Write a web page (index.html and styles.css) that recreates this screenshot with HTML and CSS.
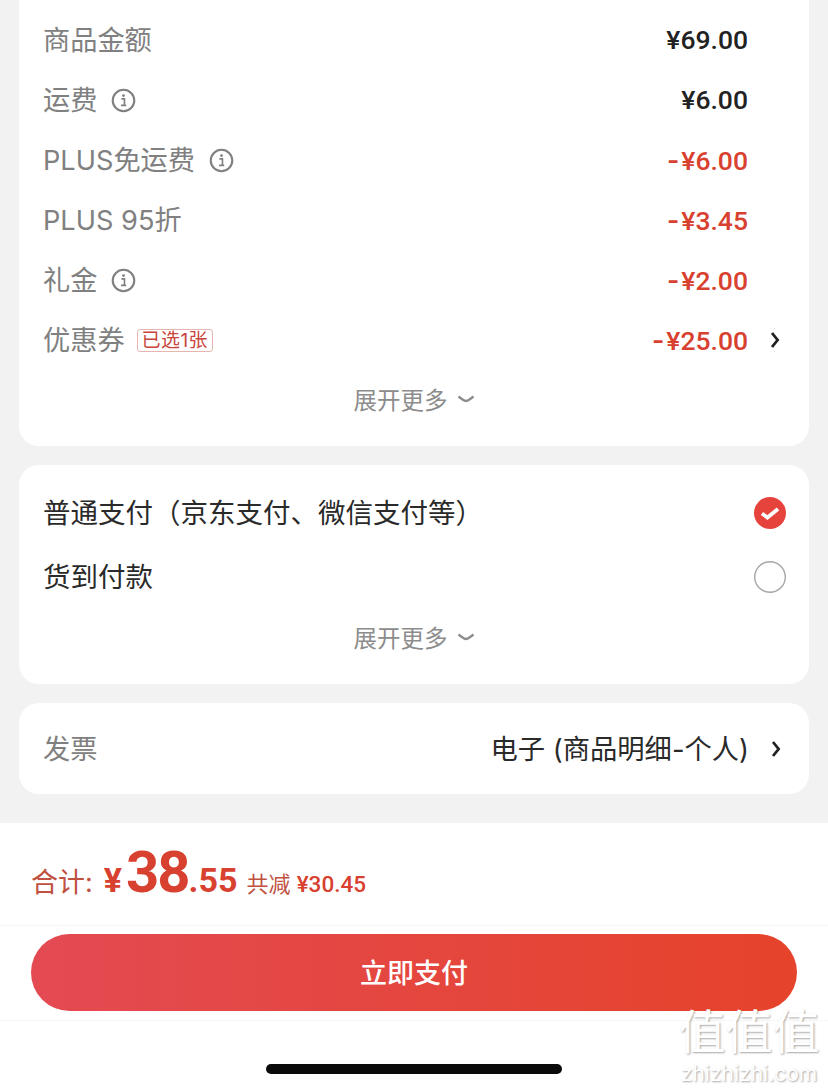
FILE: index.html
```html
<!DOCTYPE html>
<html lang="zh-CN">
  <head>
    <meta charset="UTF-8" />
    <meta name="viewport" content="width=device-width, initial-scale=1.0" />
    <title>订单结算</title>
    <link rel="stylesheet" href="styles.css">
  </head>
  <body>
    <svg class="defs" width="0" height="0">
      <symbol id="info" viewBox="0 0 26 26">
        <circle cx="13" cy="13" r="11.2" fill="none" stroke="#808080" stroke-width="2.2" />
        <circle cx="13" cy="7.9" r="1.5" fill="#808080" />
        <path d="M10.8 11.3h3.2v6.6h1.6M10.4 18h5.4" fill="none" stroke="#808080" stroke-width="1.7" />
      </symbol>
      <symbol id="arrow" viewBox="0 0 10 18">
        <path d="M2 2l5.6 7L2 16" fill="none" stroke="#222" stroke-width="2.8" />
      </symbol>
      <symbol id="caret" viewBox="0 0 18 8">
        <path d="M1.500 1.500C5 4 7 6 9 6s4-2 7.500-4.500" fill="none" stroke="#8c8c8c" stroke-width="2.400" />
      </symbol>
    </svg>

    <main class="content">
      <section class="card card-price">
        <div class="row">
          <span class="label">商品金额</span>
          <span class="amount">¥69.00</span>
        </div>
        <div class="row">
          <span class="label">运费</span>
          <svg class="info"><use href="#info" /></svg>
          <span class="amount">¥6.00</span>
        </div>
        <div class="row">
          <span class="label">PLUS免运费</span>
          <svg class="info"><use href="#info" /></svg>
          <span class="amount red">-¥6.00</span>
        </div>
        <div class="row">
          <span class="label">PLUS 95折</span>
          <span class="amount red">-¥3.45</span>
        </div>
        <div class="row">
          <span class="label">礼金</span>
          <svg class="info"><use href="#info" /></svg>
          <span class="amount red">-¥2.00</span>
        </div>
        <div class="row">
          <span class="label">优惠券</span>
          <span class="tag">已选1张</span>
          <span class="amount red">-¥25.00</span>
          <svg class="arrow"><use href="#arrow" /></svg>
        </div>
        <div class="more">展开更多<svg class="caret"><use href="#caret" /></svg></div>
      </section>

      <section class="card card-pay">
        <div class="pay-row">
          <span class="pay-name">普通支付（京东支付、微信支付等）</span>
          <svg class="radio" viewBox="0 0 32 32">
            <circle cx="16" cy="16" r="16" fill="#e5433c" />
            <path d="M8 16.500l5.400 4 10.600-8.500" fill="none" stroke="#fff" stroke-width="3.800" />
          </svg>
        </div>
        <div class="pay-row">
          <span class="pay-name">货到付款</span>
          <svg class="radio" viewBox="0 0 32 32">
            <circle cx="16" cy="16" r="15.300" fill="#fff" stroke="#a6a6a6" stroke-width="1.400" />
          </svg>
        </div>
        <div class="more more-pay">展开更多<svg class="caret"><use href="#caret" /></svg></div>
      </section>

      <section class="card card-invoice">
        <span class="label">发票</span>
        <span class="invoice-value">电子 (商品明细-个人)</span>
        <svg class="arrow"><use href="#arrow" /></svg>
      </section>
    </main>

    <footer class="footer">
      <div class="total">
        <span class="total-label">合计:</span>
        <span class="total-yen">¥</span><span class="total-big">38</span><span class="total-small">.55</span>
        <span class="total-off">共减 <b>¥30.45</b></span>
      </div>
      <div class="action">
        <button class="pay-btn">立即支付</button>
      </div>
      <div class="home-area"><div class="home-bar"></div></div>
    </footer>

    <div class="watermark">
      <div class="wm-logo">值值值</div>
      <div class="wm-url">zhizhizhi.com</div>
    </div>
  </body>
</html>
```

FILE: styles.css
```css
* {
  box-sizing: border-box;
}
html,
body {
  margin: 0;
  height: 1090px;
  overflow: hidden;
}
body {
  position: relative;
  width: 828px;
  background-color: #f2f2f2;
  font-family: Inter, "Noto Sans CJK SC", sans-serif;
}
.defs {
  position: absolute;
}
.content {
  display: flow-root;
  height: 823px;
  padding: 0 19px;
}
.card {
  background-color: #fff;
  border-radius: 20px;
}
.card-price {
  height: 466px;
  margin-top: -20px;
  padding: 30px 0 0 24px;
}
.card-pay {
  height: 219px;
  margin-top: 19px;
  padding: 16px 0 0 24px;
}
.card-invoice {
  display: flex;
  align-items: center;
  height: 91px;
  margin-top: 19px;
  padding: 0 28px 0 24px;
}
.row {
  display: flex;
  align-items: center;
  height: 60px;
}
.label {
  padding-bottom: 4px;
  font-size: 27.2px;
  color: #808080;
}
.info {
  width: 25px;
  height: 25px;
  margin-left: 14px;
}
.tag {
  margin-left: 12px;
  padding: 0 4px;
  height: 23px;
  line-height: 21px;
  font-size: 19px;
  letter-spacing: 0.4px;
  color: #c9453c;
  border: 1px solid #e6b5b0;
  border-radius: 3px;
}
.amount {
  flex: none;
  width: 200px;
  margin-left: auto;
  margin-right: 61px;
  line-height: 32px;
  text-align: right;
  font-family: Roboto, sans-serif;
  font-size: 26.5px;
  font-weight: 500;
  color: #222;
}
.red {
  color: #d8402f;
}
.red::first-letter {
  font-family: Inter, sans-serif;
  font-weight: 600;
  letter-spacing: 2px;
}
.arrow {
  flex: none;
  width: 10px;
  height: 18px;
}
.row .arrow {
  margin-left: -39px;
  margin-right: 29px;
}
.more {
  display: flex;
  justify-content: center;
  align-items: center;
  height: 60px;
  margin-left: -24px;
  padding-bottom: 2px;
  font-size: 23.5px;
  color: #8c8c8c;
}
.more-pay {
  height: 44px;
  margin-top: 7px;
}
.caret {
  width: 18px;
  height: 8px;
  margin-left: 9px;
}
.pay-row {
  display: flex;
  align-items: center;
  justify-content: space-between;
  height: 64px;
  padding-right: 23px;
}
.pay-name {
  padding-bottom: 4px;
  font-size: 27.5px;
  color: #2a2a2a;
}
.radio {
  width: 32px;
  height: 32px;
}
.invoice-value {
  margin-left: auto;
  padding-bottom: 4px;
  font-size: 27.3px;
  color: #2a2a2a;
}
.card-invoice .arrow {
  margin-left: 22px;
}
.footer {
  height: 267px;
  background-color: #fff;
}
.total {
  display: flex;
  align-items: baseline;
  height: 103px;
  padding: 15px 0 0 31px;
  color: #d8402f;
  border-bottom: 1px solid #f7f7f7;
}
.total-label {
  font-size: 27px;
  color: #c0513f;
}
.total-yen {
  margin-left: 11px;
  font-family: Roboto, sans-serif;
  font-size: 34px;
  font-weight: 700;
}
.total-big {
  margin-left: 4px;
  font-family: Roboto, sans-serif;
  font-size: 58px;
  font-weight: 700;
  line-height: 1.2;
  letter-spacing: -2px;
}
.total-small {
  font-family: Roboto, sans-serif;
  font-size: 34px;
  font-weight: 700;
}
.total-off {
  margin-left: 9px;
  font-size: 22px;
  color: #c0513f;
}
.total-off b {
  font-family: Roboto, sans-serif;
  font-size: 22.5px;
  font-weight: 500;
  color: #d8402f;
}
.action {
  height: 95px;
  padding: 8px 31px 0;
  border-bottom: 1px solid #f7f7f7;
}
.pay-btn {
  display: block;
  width: 100%;
  height: 77px;
  padding: 0 0 2px;
  background: linear-gradient(90deg, #e34a52, #e6432b);
  color: #fff;
  border: none;
  border-radius: 39px;
  font-family: inherit;
  font-size: 27px;
  font-weight: 500;
}
.home-area {
  display: flex;
  justify-content: center;
  padding-top: 43px;
}
.home-bar {
  width: 296px;
  height: 10px;
  background-color: #0a0a0a;
  border-radius: 5px;
}
.watermark {
  position: absolute;
  right: 8px;
  top: 1003px;
  width: 142px;
  color: #fff;
  text-align: center;
  text-shadow: 1px 1px 2px rgba(0, 0, 0, 0.35);
}
.wm-logo {
  height: 60px;
  font-size: 47px;
  line-height: 58px;
  white-space: nowrap;
}
.wm-url {
  font-size: 21px;
  line-height: 22px;
  white-space: nowrap;
}
```
